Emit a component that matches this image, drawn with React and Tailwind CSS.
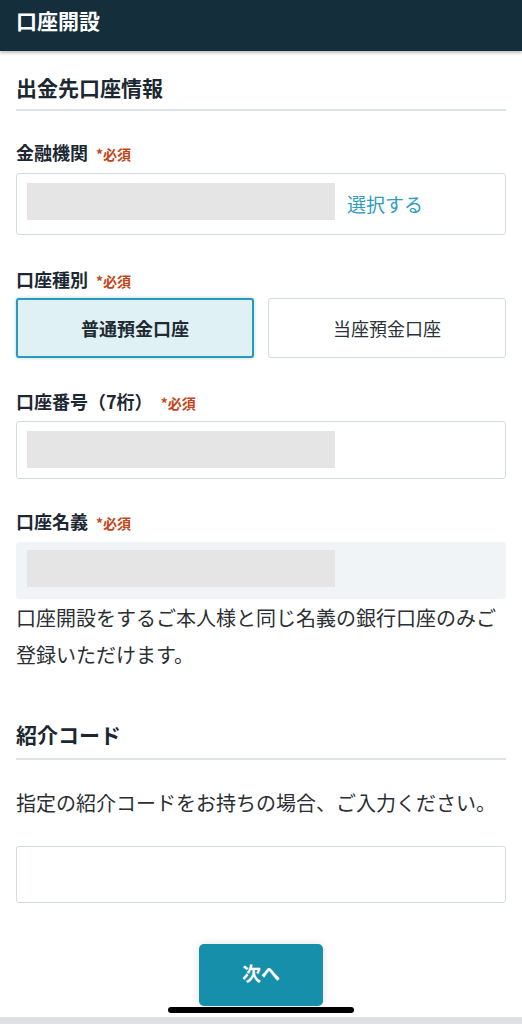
import { useState } from "react";

const font = { fontFamily: '"Noto Sans CJK JP", "Noto Sans", sans-serif' };

function Label({ children }) {
    return (
        <div className="flex items-center h-[24px] leading-[24px]">
            <span className="text-[18px] font-bold text-[#1b2832]">{children}</span>
        </div>
    );
}

function Required() {
    return <span className="text-[14px] font-bold text-[#c2461a] ml-[8px]">*必須</span>;
}

function Placeholder() {
    return <div className="w-[308px] h-[37px] bg-[#e5e5e5]"></div>;
}

export default function App() {
    const [type, setType] = useState("futsu");

    return (
        <div className="relative w-[522px] h-[1024px] overflow-hidden bg-white" style={font}>
            <header className="h-[51px] bg-[#142e3b] flex items-center px-4 shadow-[0_2px_3px_rgba(0,0,0,0.25)] relative z-10">
                <h1 className="text-[21px] font-bold text-white leading-none -mt-[10px]">口座開設</h1>
            </header>

            <main className="px-4">
                {/* 出金先口座情報 */}
                <div className="mt-[21px] pb-[7px] border-b-2 border-[#dde5ea]">
                    <h2 className="text-[21px] font-bold text-[#1b2832] leading-[30px]">出金先口座情報</h2>
                </div>

                <div className="mt-[30px]">
                    <Label>金融機関<Required /></Label>
                </div>
                <div className="mt-[8px] h-[62px] border border-[#d3dce2] rounded-[3px] flex items-start pt-[9px] pl-[10px]">
                    <Placeholder />
                    <span className="ml-[12px] mt-[9px] text-[19px] text-[#2d9cbd] leading-[24px]">選択する</span>
                </div>

                <div className="mt-[33px]">
                    <Label>口座種別<Required /></Label>
                </div>
                <div className="mt-[6px] grid grid-cols-2 gap-[14px]">
                    <button
                        onClick={() => setType("futsu")}
                        className={
                            type === "futsu"
                                ? "h-[60px] rounded-[3px] border-2 border-[#2b9bb9] bg-[#dff1f5] text-[18px] font-bold text-[#1f2a33] shadow-[0_0_3px_rgba(43,155,185,0.5)]"
                                : "h-[60px] rounded-[3px] border border-[#d3dce2] bg-white text-[18px] text-[#2a3138]"
                        }
                    >
                        普通預金口座
                    </button>
                    <button
                        onClick={() => setType("toza")}
                        className={
                            type === "toza"
                                ? "h-[60px] rounded-[3px] border-2 border-[#2b9bb9] bg-[#dff1f5] text-[18px] font-bold text-[#1f2a33] shadow-[0_0_3px_rgba(43,155,185,0.5)]"
                                : "h-[60px] rounded-[3px] border border-[#d3dce2] bg-white text-[18px] text-[#2a3138]"
                        }
                    >
                        当座預金口座
                    </button>
                </div>

                <div className="mt-[32px]">
                    <Label>口座番号（7桁）<Required /></Label>
                </div>
                <div className="mt-[7px] h-[58px] border border-[#d3dce2] rounded-[3px] pt-[9px] pl-[10px]">
                    <Placeholder />
                </div>

                <div className="mt-[31px]">
                    <Label>口座名義<Required /></Label>
                </div>
                <div className="mt-[8px] h-[57px] bg-[#f1f4f7] rounded-[3px] pt-[8px] pl-[11px]">
                    <Placeholder />
                </div>
                <p className="text-[20px] leading-[37px] text-[#2b2f33]">
                    口座開設をするご本人様と同じ名義の銀行口座のみご登録いただけます。
                </p>

                {/* 紹介コード */}
                <div className="mt-[46px] pb-[9px] border-b-2 border-[#dde5ea]">
                    <h2 className="text-[21px] font-bold text-[#1b2832] leading-[30px]">紹介コード</h2>
                </div>
                <p className="mt-[24px] text-[20px] leading-[37px] text-[#2b2f33]">
                    指定の紹介コードをお持ちの場合、ご入力ください。
                </p>
                <div className="mt-[25px] h-[57px] border border-[#d3dce2] rounded-[3px]"></div>

                <div className="mt-[41px] flex justify-center">
                    <button className="w-[124px] h-[62px] rounded-[5px] bg-[#1690aa] text-white text-[19px] font-bold shadow-[0_0_10px_rgba(0,0,0,0.12)] pb-[4px]">
                        次へ
                    </button>
                </div>
            </main>

            {/* home indicator */}
            <div className="absolute left-[168px] top-[1007px] w-[186px] h-[6px] rounded-full bg-black"></div>
            <div className="absolute left-0 right-0 bottom-0 h-[7px] bg-[#dde1e4]"></div>
        </div>
    );
}
